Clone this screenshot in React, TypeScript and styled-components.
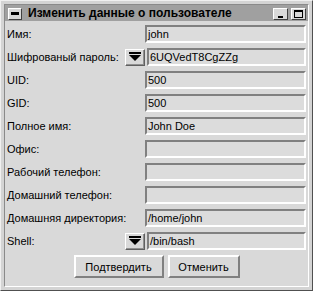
import React from "react";
import styled, {createGlobalStyle} from "styled-components";

const GlobalStyle = createGlobalStyle`
  html, body {
    margin: 0;
    padding: 0;
    background: #d9d9d9;
  }
  body {
    font-family: "Liberation Sans", Arial, sans-serif;
    font-size: 11px;
    color: #000;
  }
`;

const Frame = styled.div`
  box-sizing: border-box;
  width: 313px;
  height: 291px;
  background: #d4d4d4;
  border: 1px solid;
  border-color: #f0f0f0 #505050 #505050 #f0f0f0;
  padding: 3px;
  display: flex;
`;

const Inner = styled.div`
  flex: 1;
  display: flex;
  flex-direction: column;
  border: 1px solid;
  border-color: #8a8a8a #ffffff #ffffff #8a8a8a;
  background: #d9d9d9;
`;

const TitleBar = styled.div`
  height: 16px;
  background: #a0a0a0;
  display: flex;
  align-items: center;
  padding: 0 2px 0 3px;
`;

const Title = styled.span`
  flex: 1;
  margin-left: 6px;
  font-weight: bold;
  font-size: 12px;
  line-height: 16px;
  white-space: nowrap;
`;

const TitleButton = styled.div<{ $kind: "menu" | "min" | "max" }>`
  position: relative;
  box-sizing: border-box;
  width: ${({$kind}) => ($kind === "menu" ? 14 : 15)}px;
  height: 12px;
  margin-left: ${({$kind}) => ($kind === "max" ? 3 : 0)}px;
  margin-top: 1px;
  background: #d9d9d9;
  border: 1px solid;
  border-color: #ffffff #404040 #404040 #ffffff;
  &::after {
    content: "";
    position: absolute;
    ${({$kind}) =>
      $kind === "menu"
        ? `left: 2px; right: 2px; top: 3px; height: 3px; background: #000;`
        : $kind === "min"
        ? `left: 4px; right: 4px; bottom: 1px; height: 2px; background: #000;`
        : `left: 2px; right: 2px; top: 1px; bottom: 1px; border: 1px solid #000; border-top-width: 2px;`}
  }
`;

const Content = styled.div`
  flex: 1;
  display: flex;
  flex-direction: column;
  gap: 5px;
  padding: 4px 2px 0 2px;
`;

const Row = styled.div`
  display: flex;
  align-items: center;
  height: 18px;
`;

const Label = styled.span`
  flex: 1;
  white-space: nowrap;
`;

const Field = styled.div<{ $narrow?: boolean }>`
  box-sizing: border-box;
  width: ${({$narrow}) => ($narrow ? 159 : 161)}px;
  height: 18px;
  border: 2px solid;
  border-color: #808080 #ffffff #ffffff #808080;
  background: #dcdcdc;
  padding: 0 2px 0 1px;
  line-height: 15px;
  white-space: nowrap;
  overflow: hidden;
`;

const DropButton = styled.div`
  box-sizing: border-box;
  width: 20px;
  height: 17px;
  margin-right: 2px;
  display: flex;
  align-items: center;
  justify-content: center;
  background: #d9d9d9;
  border: 1px solid;
  border-color: #ffffff #606060 #606060 #ffffff;
  box-shadow: inset -1px -1px 0 #909090;
`;

const ButtonRow = styled.div`
  display: flex;
  justify-content: center;
  gap: 4px;
`;

const Button = styled.button<{ $w: number }>`
  box-sizing: border-box;
  width: ${({$w}) => $w}px;
  height: 23px;
  font-family: "Liberation Sans", Arial, sans-serif;
  font-size: 11px;
  color: #000;
  background: #d9d9d9;
  border: 2px solid;
  border-color: #ffffff #808080 #808080 #ffffff;
  padding: 0;
`;

const DropIcon = () => (
  <svg width="12" height="10" viewBox="0 0 12 10">
    <rect x="0" y="0" width="12" height="2" fill="#000"/>
    <polygon points="0,3 12,3 6,9" fill="#000"/>
  </svg>
);

type FieldRow = {
  label: string;
  value: string;
  drop?: boolean;
};

const rows: FieldRow[] = [
  {label: "Имя:", value: "john"},
  {label: "Шифрованый пароль:", value: "6UQVedT8CgZZg", drop: true},
  {label: "UID:", value: "500"},
  {label: "GID:", value: "500"},
  {label: "Полное имя:", value: "John Doe"},
  {label: "Офис:", value: ""},
  {label: "Рабочий телефон:", value: ""},
  {label: "Домашний телефон:", value: ""},
  {label: "Домашняя директория:", value: "/home/john"},
  {label: "Shell:", value: "/bin/bash", drop: true},
];

export default function App() {
  return (
    <>
      <GlobalStyle/>
      <Frame>
        <Inner>
          <TitleBar>
            <TitleButton $kind="menu"/>
            <Title>Изменить данные о пользователе</Title>
            <TitleButton $kind="min"/>
            <TitleButton $kind="max"/>
          </TitleBar>
          <Content>
            {rows.map(r => (
              <Row key={r.label}>
                <Label>{r.label}</Label>
                {r.drop && <DropButton><DropIcon/></DropButton>}
                <Field $narrow={r.drop}>{r.value}</Field>
              </Row>
            ))}
            <ButtonRow>
              <Button $w={90}>Подтвердить</Button>
              <Button $w={72}>Отменить</Button>
            </ButtonRow>
          </Content>
        </Inner>
      </Frame>
    </>
  );
}
